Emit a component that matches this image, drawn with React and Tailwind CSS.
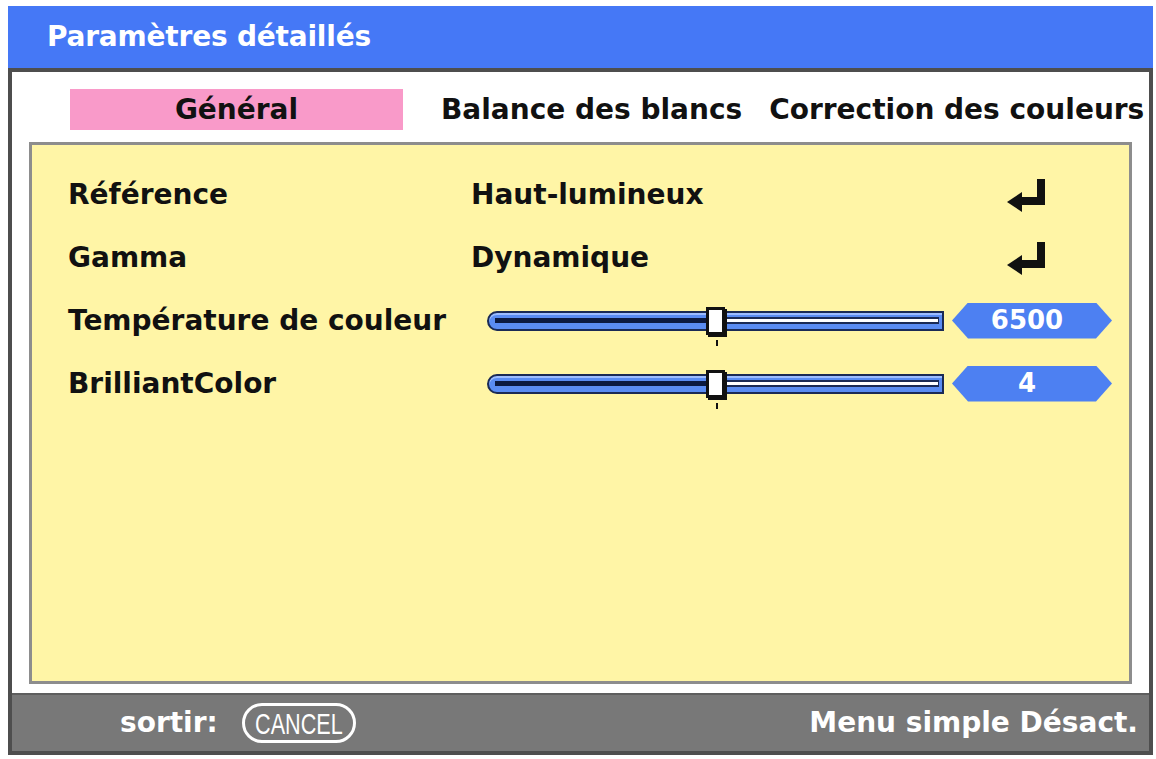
import React from 'react';

const font = { fontFamily: '"DejaVu Sans", "Liberation Sans", sans-serif' };

// Enter / return arrow used on selectable rows
function EnterIcon() {
  return (
    <svg width="44" height="38" viewBox="0 0 44 38" className="block">
      <rect x="32" y="3" width="8" height="26" fill="#111" />
      <rect x="14" y="21" width="26" height="8" fill="#111" />
      <polygon points="2,26 17,16 17,36" fill="#111" />
    </svg>
  );
}

function Slider({ value }) {
  return (
    <div className="flex items-center gap-[8px] flex-1">
      <div className="relative h-[20px] flex-1 rounded-l-full rounded-r-[7px] bg-[#5a8cf2] border-2 border-[#1a2a55] shadow-[inset_0_2px_0_#9dbdff]">
        {/* filled part */}
        <div className="absolute left-[6px] top-[5px] h-[5px] w-[215px] bg-[#0c1a40]" />
        {/* remaining part */}
        <div className="absolute left-[230px] right-[3px] top-[4px] h-[7px] bg-[#1a2a55]" />
        <div className="absolute left-[230px] right-[4px] top-[6px] h-[3px] bg-white" />
        {/* thumb */}
        <div className="absolute left-[217px] top-[-6px] w-[19px] h-[28px] bg-white border-[3px] border-[#111] shadow-[2px_2px_0_#111]" />
        <div className="absolute left-[227px] top-[27px] w-[2px] h-[6px] bg-[#111]" />
      </div>
      <div className="w-[160px] h-[36px] flex items-center justify-center bg-[#4d80f2] text-white font-bold text-[26px] [clip-path:polygon(0_50%,16px_0,calc(100%-16px)_0,100%_50%,calc(100%-16px)_100%,16px_100%)]">
        <span className="-ml-[10px]">{value}</span>
      </div>
    </div>
  );
}

export default function App() {
  const rows = [
    { label: 'Référence', value: 'Haut-lumineux' },
    { label: 'Gamma', value: 'Dynamique' },
    { label: 'Température de couleur', slider: '6500' },
    { label: 'BrilliantColor', slider: '4' },
  ];

  return (
    <div className="w-[1156px] h-[759px] bg-white pt-[6px] pl-[8px]" style={font}>
      <div className="w-[1145px] flex flex-col">
        {/* title bar */}
        <div className="h-[62px] bg-[#4578f6] flex items-center pl-[39px]">
          <span className="text-white font-bold text-[28px] tracking-[-0.2px]">Paramètres détaillés</span>
        </div>

        {/* body */}
        <div className="h-[687px] border-4 border-[#4e4e4e] bg-white flex flex-col">
          {/* tabs */}
          <div className="flex items-center h-[41px] mt-[17px] text-[28px] font-bold text-[#111] whitespace-nowrap">
            <div className="ml-[58px] w-[333px] h-[41px] bg-[#f99ac9] flex items-center justify-center">Général</div>
            <div className="ml-[38px]">Balance des blancs</div>
            <div className="ml-[27px]">Correction des couleurs</div>
          </div>

          {/* content panel */}
          <div className="mx-[17px] mt-[12px] h-[542px] border-[3px] border-[#8d8d8d] bg-[#fff5a6] pt-[18px] pl-[36px] pr-[17px]">
            {rows.map((row) => (
              <div key={row.label} className="h-[63px] flex items-center text-[28px] font-bold text-[#111] whitespace-nowrap">
                {row.slider ? (
                  <>
                    <div className="w-[419px]">{row.label}</div>
                    <Slider value={row.slider} />
                  </>
                ) : (
                  <>
                    <div className="w-[403px]">{row.label}</div>
                    <div className="flex-1">{row.value}</div>
                    <div className="mr-[63px]">
                      <EnterIcon />
                    </div>
                  </>
                )}
              </div>
            ))}
          </div>

          {/* bottom bar */}
          <div className="mt-auto h-[58px] bg-[#787878] border-t-2 border-[#5e5e5e] flex items-center pl-[108px] pr-[11px] text-white font-bold text-[28px]">
            <span>sortir:</span>
            <span className="ml-[24px] w-[114px] h-[40px] rounded-full border-[3px] border-white flex items-center justify-center">
              <span className="inline-block scale-x-[0.72] text-[30px] font-normal" style={{ fontFamily: '"Liberation Sans", sans-serif' }}>CANCEL</span>
            </span>
            <span className="ml-auto">Menu simple Désact.</span>
          </div>
        </div>
      </div>
    </div>
  );
}
